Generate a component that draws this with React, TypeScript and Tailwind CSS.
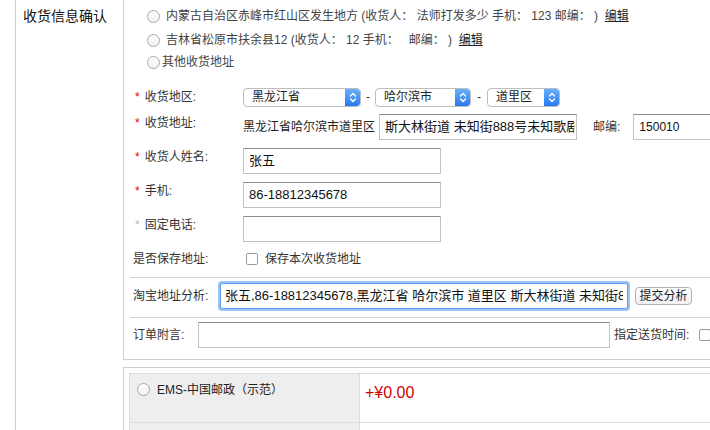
import React from "react";

function Radio() {
  return (
    <span className="inline-block w-[13px] h-[13px] shrink-0 rounded-full border border-[#a8a8a8] bg-linear-to-b from-white to-[#f2f2f2]" />
  );
}

function Check() {
  return (
    <span className="inline-block w-[12px] h-[12px] shrink-0 rounded-[2px] border border-[#9a9a9a] bg-white" />
  );
}

function Arrows() {
  return (
    <svg width="8" height="11" viewBox="0 0 8 11" fill="none">
      <path d="M1.5 4 L4 1.5 L6.5 4" stroke="white" strokeWidth="1.4" strokeLinecap="round" strokeLinejoin="round" />
      <path d="M1.5 7 L4 9.5 L6.5 7" stroke="white" strokeWidth="1.4" strokeLinecap="round" strokeLinejoin="round" />
    </svg>
  );
}

function Sel({ w, text }: { w: string; text: string }) {
  return (
    <div className={`flex h-[19px] ${w} shrink-0 overflow-hidden rounded-[4px] border border-[#bdbdbd] bg-white`}>
      <span className="flex-1 pl-[8px] text-[12px] leading-[17px] text-[#222]">{text}</span>
      <span className="flex w-[15px] items-center justify-center rounded-r-[3px] bg-linear-to-b from-[#69b0fb] to-[#2678ef]">
        <Arrows />
      </span>
    </div>
  );
}

function Label({ text, star }: { text: string; star?: "red" | "gray" }) {
  return (
    <span className="flex items-center text-[12px] leading-[16px] text-[#333]">
      {star === "red" && <span className="ml-[2px] mr-[5px] text-[#e00]">*</span>}
      {star === "gray" && <span className="ml-[2px] mr-[5px] text-[#bbb]">*</span>}
      {text}
    </span>
  );
}

const inputCls =
  "h-[26px] shrink-0 border border-[#c2c2c2] border-t-[#8c8c8c] bg-white pl-[5px] flex items-center text-[13px] text-[#111] whitespace-nowrap overflow-hidden";

export default function App() {
  return (
    <div className="relative h-[430px] w-[710px] overflow-hidden bg-white pl-[15px] font-['Liberation_Sans','Noto_Sans_CJK_SC',sans-serif]">
      <div className="flex h-full">
        {/* left title column */}
        <div className="w-[108px] shrink-0 border-l border-[#cfcfcf] pl-[7px] pt-[6px]">
          <div className="text-[14px] leading-[20px] text-[#111]">收货信息确认</div>
        </div>

        {/* right column */}
        <div className="flex min-w-0 flex-1 flex-col">
          {/* section 1 */}
          <div className="flex h-[360px] shrink-0 flex-col overflow-hidden border-b border-l border-[#cfcfcf] pl-[6px]">
            {/* address list */}
            <div className="-mt-[20px] flex flex-col pl-[17px] text-[12px] text-[#444] whitespace-nowrap">
              <div className="flex h-[24px] items-center">
                <Radio />
              </div>
              <div className="flex h-[24px] items-center gap-[6px]">
                <Radio />
                <span>
                  内蒙古自治区赤峰市红山区发生地方 (收货人：&nbsp;法师打发多少 手机：&nbsp;123 邮编：&nbsp;)&nbsp;&nbsp;
                  <span className="text-[#222] underline">编辑</span>
                </span>
              </div>
              <div className="flex h-[24px] items-center gap-[6px]">
                <Radio />
                <span>
                  吉林省松原市扶余县12 (收货人：&nbsp;12 手机：&nbsp;&nbsp;&nbsp;邮编：&nbsp;)&nbsp;&nbsp;
                  <span className="text-[#222] underline">编辑</span>
                </span>
              </div>
              <div className="flex h-[20px] items-center gap-[2px]">
                <Radio />
                <span>其他收货地址</span>
              </div>
            </div>

            {/* R1 region */}
            <div className="mt-[14px] flex h-[22px] shrink-0 items-center pl-[3px] whitespace-nowrap">
              <div className="w-[110px] shrink-0">
                <Label text="收货地区:" star="red" />
              </div>
              <Sel w="w-[118px]" text="黑龙江省" />
              <span className="mx-[5px] text-[12px] text-[#333]">-</span>
              <Sel w="w-[96px]" text="哈尔滨市" />
              <span className="mx-[6px] text-[12px] text-[#333]">-</span>
              <Sel w="w-[73px]" text="道里区" />
            </div>

            {/* R2 address */}
            <div className="mt-[6px] flex shrink-0 items-start pl-[3px] whitespace-nowrap">
              <div className="w-[110px] shrink-0 pt-[1px]">
                <Label text="收货地址:" star="red" />
              </div>
              <div className="flex h-[26px] items-center">
                <span className="shrink-0 text-[12px] text-[#222]">黑龙江省哈尔滨市道里区</span>
                <div className={`ml-[4px] w-[198px] ${inputCls}`}>
                  <span className="block w-[190px] overflow-hidden">斯大林街道 未知街888号未知歌剧院</span>
                </div>
                <span className="ml-[16px] shrink-0 text-[12px] text-[#333]">邮编:</span>
                <div className={`ml-[13px] w-[100px] ${inputCls} !text-[12px]`}>150010</div>
              </div>
            </div>

            {/* R3 name */}
            <div className="mt-[8px] flex shrink-0 items-start pl-[3px]">
              <div className="w-[110px] shrink-0 pt-[1px]">
                <Label text="收货人姓名:" star="red" />
              </div>
              <div className={`w-[198px] ${inputCls}`}>张五</div>
            </div>

            {/* R4 mobile */}
            <div className="mt-[8px] flex shrink-0 items-start pl-[3px]">
              <div className="w-[110px] shrink-0 pt-[1px]">
                <Label text="手机:" star="red" />
              </div>
              <div className={`w-[198px] ${inputCls}`}>86-18812345678</div>
            </div>

            {/* R5 phone */}
            <div className="mt-[8px] flex shrink-0 items-start pl-[3px]">
              <div className="w-[110px] shrink-0 pt-[1px]">
                <Label text="固定电话:" star="gray" />
              </div>
              <div className={`w-[198px] ${inputCls}`}></div>
            </div>

            {/* R6 save */}
            <div className="mt-[8px] flex h-[18px] shrink-0 items-center pl-[3px]">
              <div className="w-[110px] shrink-0">
                <Label text="是否保存地址:" />
              </div>
              <span className="ml-[3px] flex items-center">
                <Check />
              </span>
              <span className="ml-[7px] text-[12px] text-[#333]">保存本次收货地址</span>
            </div>

            <div className="mt-[9px] h-px shrink-0 bg-[#d0d0d0]" />

            {/* R7 taobao */}
            <div className="mt-[3px] flex h-[30px] shrink-0 items-center pl-[3px] whitespace-nowrap">
              <div className="w-[87px] shrink-0">
                <Label text="淘宝地址分析:" />
              </div>
              <div className="flex h-[26px] w-[408px] shrink-0 items-center overflow-hidden rounded-[2px] border border-[#5d9be6] bg-white pl-[4px] text-[13px] text-[#111] shadow-[0_0_0_2px_#9cc4f3]">
                <span className="block w-[398px] overflow-hidden">
                  张五,86-18812345678,黑龙江省 哈尔滨市 道里区 斯大林街道 未知街888号未知歌剧院
                </span>
              </div>
              <div className="ml-[7px] flex h-[18px] w-[57px] shrink-0 items-center justify-center rounded-[4px] border border-[#b2b2b2] bg-linear-to-b from-white to-[#f1f1f1] text-[12px] text-[#222]">
                提交分析
              </div>
            </div>

            <div className="mt-[6px] h-px shrink-0 bg-[#d0d0d0]" />

            {/* R8 note */}
            <div className="mt-[2px] flex h-[30px] shrink-0 items-center pl-[3px] whitespace-nowrap">
              <div className="w-[65px] shrink-0">
                <Label text="订单附言:" />
              </div>
              <div className={`w-[412px] ${inputCls}`}></div>
              <span className="ml-[4px] shrink-0 text-[12px] text-[#333]">指定送货时间:</span>
              <span className="ml-[10px] flex items-center">
                <Check />
              </span>
            </div>
          </div>

          {/* section 2 shipping */}
          <div className="mt-[7px] flex-1 border-l border-t border-[#cfcfcf] pl-[5px] pt-[5px]">
            <div className="flex flex-col border-l border-t border-[#dcdcdc]">
              <div className="flex h-[49px] border-b border-[#dcdcdc]">
                <div className="w-[230px] shrink-0 border-r border-[#dcdcdc] bg-[#eeeeee] pl-[7px] pt-[9px]">
                  <div className="flex h-[13px] items-center gap-[7px]">
                    <Radio />
                    <span className="text-[12px] leading-[14px] text-[#222]">EMS-中国邮政（示范）</span>
                  </div>
                </div>
                <div className="flex-1 pl-[5px] pt-[7px]">
                  <span className="text-[16px] leading-[18px] text-[#d40000]">+¥0.00</span>
                </div>
              </div>
              <div className="flex h-[49px]">
                <div className="w-[230px] shrink-0 border-r border-[#dcdcdc] bg-[#eeeeee]" />
                <div className="flex-1" />
              </div>
            </div>
          </div>
        </div>
      </div>
    </div>
  );
}
